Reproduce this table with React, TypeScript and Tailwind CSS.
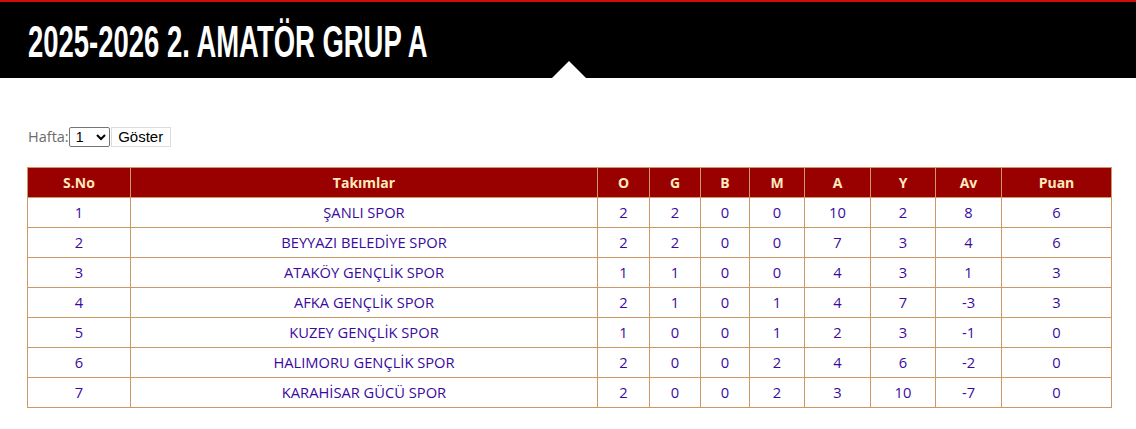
const rows = [
  [1, "ŞANLI SPOR", 2, 2, 0, 0, 10, 2, 8, 6],
  [2, "BEYYAZI BELEDİYE SPOR", 2, 2, 0, 0, 7, 3, 4, 6],
  [3, "ATAKÖY GENÇLİK SPOR", 1, 1, 0, 0, 4, 3, 1, 3],
  [4, "AFKA GENÇLİK SPOR", 2, 1, 0, 1, 4, 7, -3, 3],
  [5, "KUZEY GENÇLİK SPOR", 1, 0, 0, 1, 2, 3, -1, 0],
  [6, "HALIMORU GENÇLİK SPOR", 2, 0, 0, 2, 4, 6, -2, 0],
  [7, "KARAHİSAR GÜCÜ SPOR", 2, 0, 0, 2, 3, 10, -7, 0],
];

const headers = [
  { label: "S.No", w: "w-[103px]" },
  { label: "Takımlar", w: "w-[467px]" },
  { label: "O", w: "w-[52px]" },
  { label: "G", w: "w-[51px]" },
  { label: "B", w: "w-[49px]" },
  { label: "M", w: "w-[55px]" },
  { label: "A", w: "w-[66px]" },
  { label: "Y", w: "w-[65px]" },
  { label: "Av", w: "w-[66px]" },
  { label: "Puan", w: "w-[110px]" },
];

export default function App() {
  return (
    <div className="w-[1136px] h-[429px] bg-white overflow-hidden font-['Open_Sans',sans-serif]">
      {/* başlık */}
      <div className="relative h-[78px] bg-black border-t-2 border-[#d10a0a]">
        <h1 className="pl-[28px] pt-[17px] whitespace-nowrap">
          <span className="inline-block text-white font-['Liberation_Sans_Narrow','Liberation_Sans',sans-serif] font-bold text-[45px] leading-[45px] origin-left scale-x-[0.61]">
            2025-2026 2. AMATÖR GRUP A
          </span>
        </h1>
        <div className="absolute left-[552px] bottom-0 w-0 h-0 border-l-[17px] border-r-[17px] border-b-[17px] border-l-transparent border-r-transparent border-b-white" />
      </div>

      <div className="px-[27px] pt-[49px]">
        <div className="flex items-center h-[20px]">
          <span className="text-[#6b6b6b] text-[14.5px] pl-[1px]">Hafta:</span>
          <select className="h-[20px] w-[41px] border border-[#767676] rounded-[2px] text-[14px] font-['Liberation_Sans',sans-serif] pl-[2px] bg-white">
            <option>1</option>
          </select>
          <button className="ml-[1px] h-[20px] w-[60px] border border-[#dcdcdc] bg-white text-[15px] leading-[18px] font-['Liberation_Sans',sans-serif] text-black">
            Göster
          </button>
        </div>

        <table className="mt-[20px] w-[1085px] table-fixed border-collapse">
          <thead>
            <tr className="h-[30px] bg-[#990000]">
              {headers.map((h) => (
                <th key={h.label} className={`${h.w} border border-[#cc9966] text-[#ffe9bd] text-[14px] font-bold text-center p-0`}>
                  {h.label}
                </th>
              ))}
            </tr>
          </thead>
          <tbody>
            {rows.map((r) => (
              <tr key={r[0]} className="h-[30px]">
                {r.map((c, i) => (
                  <td key={i} className="border border-[#cc9966] text-[#3a0aa0] text-[14.7px] text-center p-0">
                    {c}
                  </td>
                ))}
              </tr>
            ))}
          </tbody>
        </table>
      </div>
    </div>
  );
}
